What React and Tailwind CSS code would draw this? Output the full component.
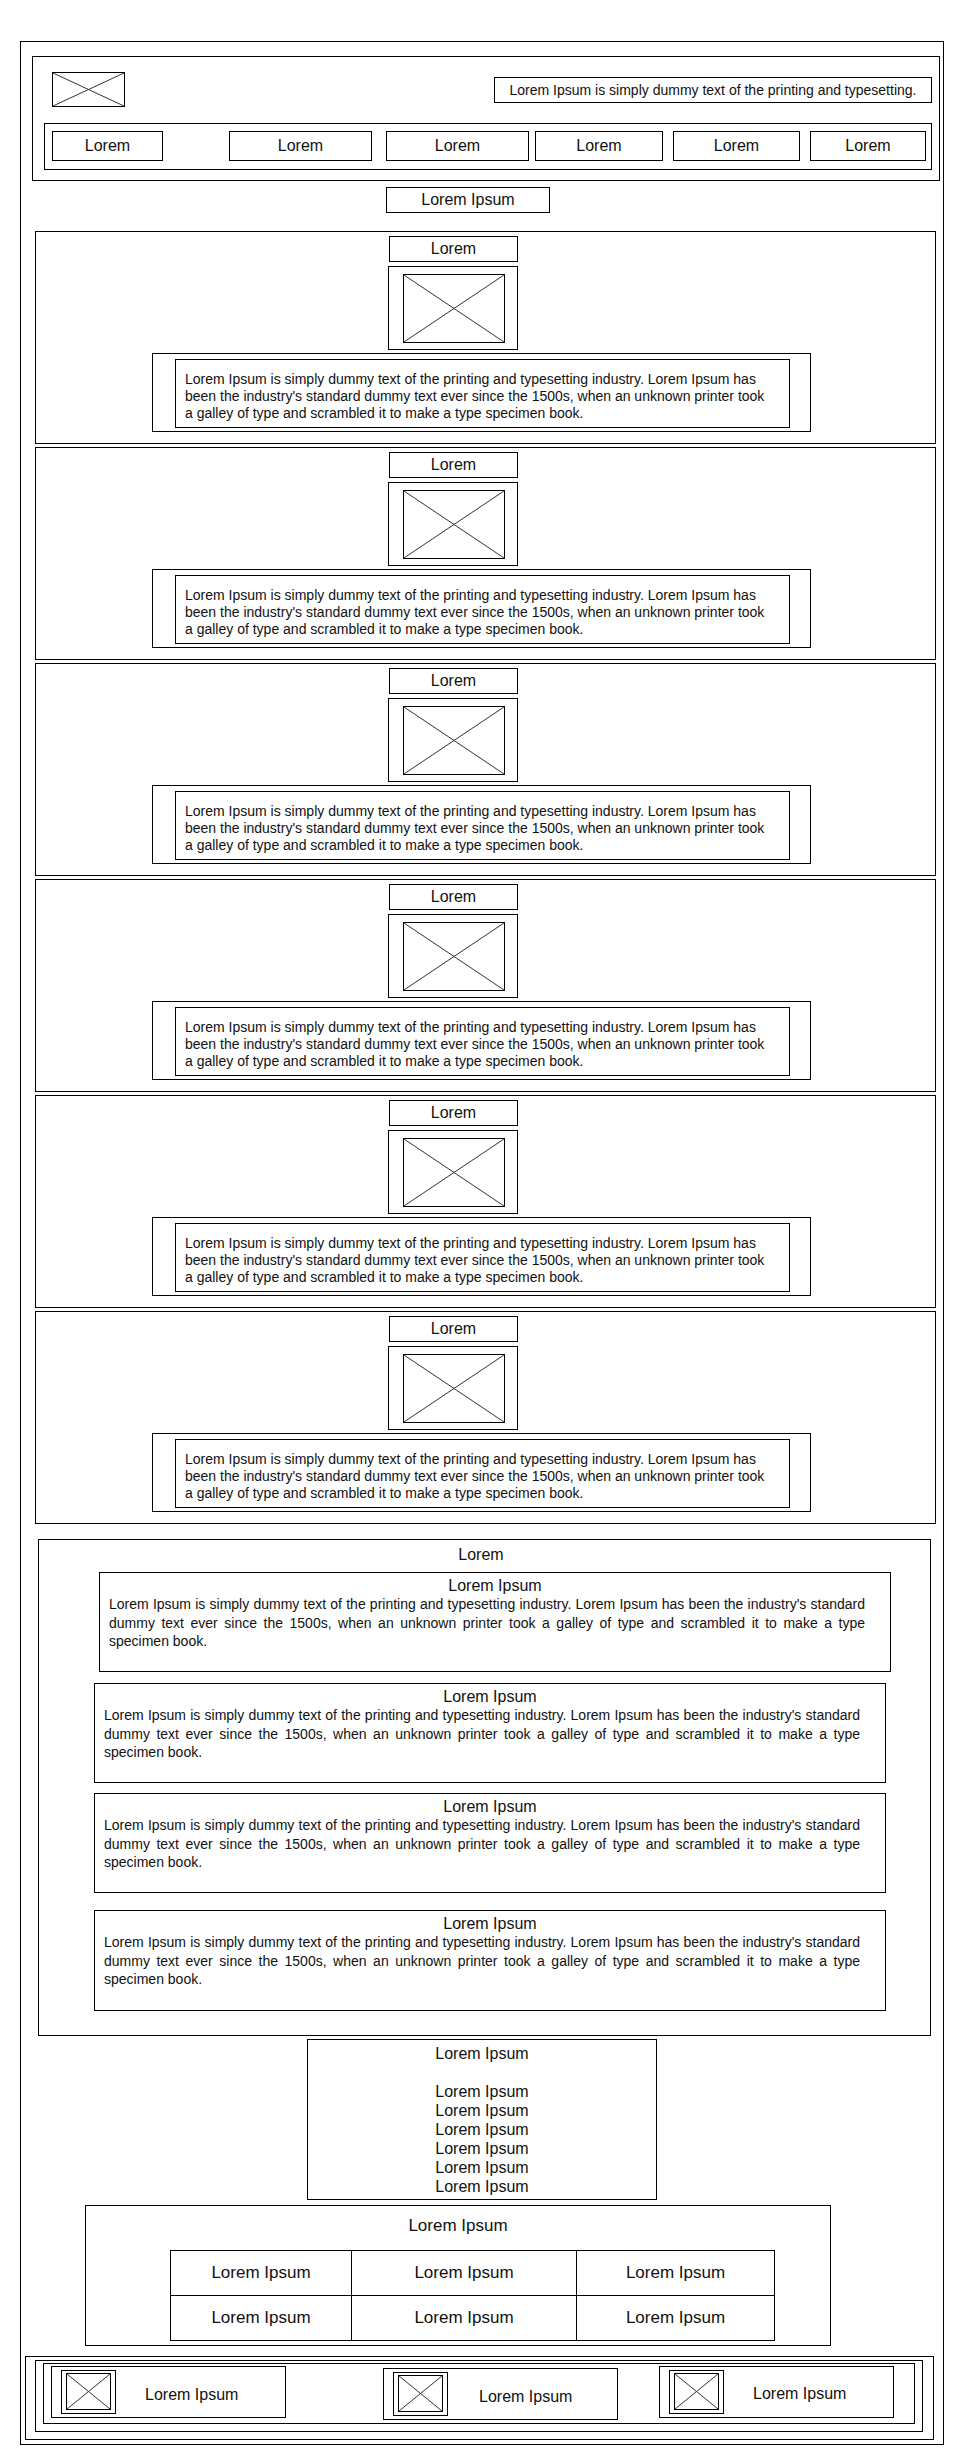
import React from "react";

const LOREM =
  "Lorem Ipsum is simply dummy text of the printing and typesetting industry. Lorem Ipsum has been the industry's standard dummy text ever since the 1500s, when an unknown printer took a galley of type and scrambled it to make a type specimen book.";

/**
 * XBox - wireframe image placeholder (box with two diagonals)
 */
function XBox({ className }) {
  return (
    <div className={"border border-black shrink-0 " + className}>
      <svg className="block w-full h-full" viewBox="0 0 100 100" preserveAspectRatio="none">
        <line x1="0" y1="0" x2="100" y2="100" stroke="#333" strokeWidth="1" vectorEffect="non-scaling-stroke" />
        <line x1="100" y1="0" x2="0" y2="100" stroke="#333" strokeWidth="1" vectorEffect="non-scaling-stroke" />
      </svg>
    </div>
  );
}

function NavButton({ className, children }) {
  return (
    <div className={"mt-[7px] h-[30px] border border-black flex items-center justify-center text-[16px] shrink-0 " + className}>
      {children}
    </div>
  );
}

function Card() {
  return (
    <div className="w-[901px] h-[213px] border border-black shrink-0">
      <div className="ml-[353px] mt-[4px] w-[129px] h-[26px] border border-black flex items-center justify-center text-[16px]">
        Lorem
      </div>
      <div className="ml-[352px] mt-[4px] w-[130px] h-[84px] border border-black">
        <XBox className="ml-[14px] mt-[7px] w-[102px] h-[69px]" />
      </div>
      <div className="ml-[116px] mt-[3px] w-[659px] h-[79px] border border-black">
        <div className="ml-[22px] mt-[5px] w-[615px] h-[69px] border border-black pl-[9px] pr-[21px] pt-[11px] text-[14px] leading-[17px]">
          {LOREM}
        </div>
      </div>
    </div>
  );
}

function FaqItem({ className }) {
  return (
    <div className={"w-[792px] border border-black pt-[4px] " + className}>
      <div className="text-center text-[16px] leading-[18px]">Lorem Ipsum</div>
      <p className="pl-[9px] pr-[25px] text-[14px] leading-[18.5px] text-justify">{LOREM}</p>
    </div>
  );
}

function FooterItem({ className, textClass }) {
  return (
    <div className={"w-[235px] h-[52px] border border-black flex items-start shrink-0 " + className}>
      <div className="ml-[9px] mt-[3px] w-[55px] h-[44px] border border-black">
        <XBox className="ml-[4px] mt-[2px] w-[45px] h-[37px]" />
      </div>
      <div className={"text-[16px] leading-[19px] " + textClass}>Lorem Ipsum</div>
    </div>
  );
}

export default function App() {
  const cells = ["Lorem Ipsum", "Lorem Ipsum", "Lorem Ipsum", "Lorem Ipsum", "Lorem Ipsum", "Lorem Ipsum"];

  return (
    <div className="w-[964px] min-h-[2456px] bg-white pt-[41px] text-[#111] font-['Liberation_Sans',Arial,sans-serif]">
      <div className="ml-[20px] w-[924px] h-[2404px] border border-black">
        {/* header */}
        <div className="ml-[11px] mt-[14px] w-[908px] h-[125px] border border-black">
          <div className="flex items-start">
            <XBox className="ml-[19px] mt-[15px] w-[73px] h-[35px]" />
            <div className="ml-auto mr-[7px] mt-[20px] w-[438px] h-[26px] border border-black flex items-center justify-center text-[14px]">
              Lorem Ipsum is simply dummy text of the printing and typesetting.
            </div>
          </div>
          <div className="ml-[11px] mt-[16px] w-[888px] h-[47px] border border-black flex items-start">
            <NavButton className="ml-[7px] w-[111px]">Lorem</NavButton>
            <NavButton className="ml-[66px] w-[143px]">Lorem</NavButton>
            <NavButton className="ml-[14px] w-[143px]">Lorem</NavButton>
            <NavButton className="ml-[6px] w-[128px]">Lorem</NavButton>
            <NavButton className="ml-[10px] w-[127px]">Lorem</NavButton>
            <NavButton className="ml-[10px] w-[116px]">Lorem</NavButton>
          </div>
        </div>

        <div className="ml-[365px] mt-[6px] w-[164px] h-[26px] border border-black flex items-center justify-center text-[16px]">
          Lorem Ipsum
        </div>

        {/* cards */}
        <div className="ml-[14px] mt-[18px] flex flex-col gap-[3px]">
          <Card />
          <Card />
          <Card />
          <Card />
          <Card />
          <Card />
        </div>

        {/* faq */}
        <div className="ml-[17px] mt-[15px] w-[893px] h-[497px] border border-black pt-[5px]">
          <div className="text-center pr-[7px] text-[16px] leading-[19px]">Lorem</div>
          <FaqItem className="ml-[60px] mt-[8px] h-[100px]" />
          <FaqItem className="ml-[55px] mt-[11px] h-[100px]" />
          <FaqItem className="ml-[55px] mt-[10px] h-[100px]" />
          <FaqItem className="ml-[55px] mt-[17px] h-[101px]" />
        </div>

        {/* list */}
        <div className="ml-[286px] mt-[3px] w-[350px] h-[161px] border border-black pt-[4px] text-center text-[16px] leading-[19px]">
          <div>Lorem Ipsum</div>
          <div className="mt-[19px]">
            <div>Lorem Ipsum</div>
            <div>Lorem Ipsum</div>
            <div>Lorem Ipsum</div>
            <div>Lorem Ipsum</div>
            <div>Lorem Ipsum</div>
            <div>Lorem Ipsum</div>
          </div>
        </div>

        {/* table */}
        <div className="ml-[64px] mt-[5px] w-[746px] h-[141px] border border-black pt-[10px]">
          <div className="text-center text-[17px] leading-[20px]">Lorem Ipsum</div>
          <div className="ml-[84px] mt-[14px] w-[605px] border border-black grid grid-cols-[181px_225px_197px]">
            {cells.map((c, i) => (
              <div
                key={i}
                className={
                  "h-[44px] flex items-center justify-center text-[17px] " +
                  (i % 3 !== 2 ? "border-r border-black " : "") +
                  (i < 3 ? "border-b border-black h-[45px]" : "")
                }
              >
                {c}
              </div>
            ))}
          </div>
        </div>

        {/* footer */}
        <div className="ml-[4px] mt-[10px] w-[909px] h-[84px] border border-black">
          <div className="ml-[9px] mt-[3px] w-[888px] h-[72px] border border-black">
            <div className="ml-[7px] mt-[2px] w-[872px] h-[61px] border border-black flex items-start">
              <FooterItem className="ml-[7px] mt-[2px] w-[234px]" textClass="ml-[29px] mt-[18px]" />
              <FooterItem className="ml-[97px] mt-[4px]" textClass="ml-[31px] mt-[18px]" />
              <FooterItem className="ml-[41px] mt-[2px]" textClass="ml-[29px] mt-[17px]" />
            </div>
          </div>
        </div>
      </div>
    </div>
  );
}
